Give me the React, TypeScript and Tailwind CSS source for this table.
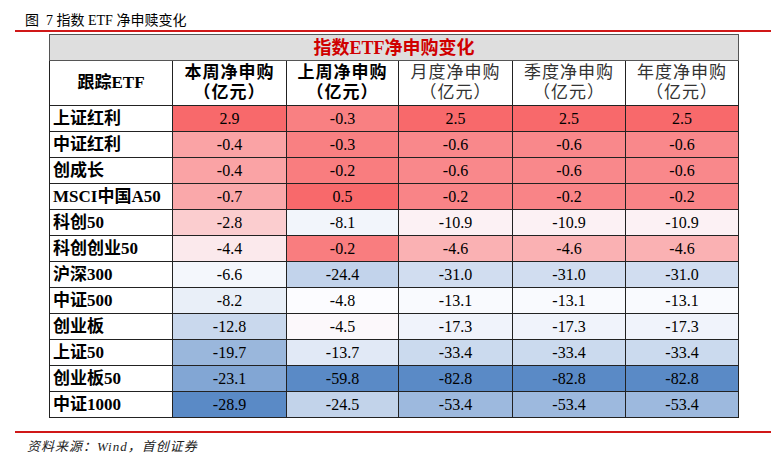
const rows: { name: string; v: number[] }[] = [
  { name: '上证红利', v: [2.9, -0.3, 2.5, 2.5, 2.5] },
  { name: '中证红利', v: [-0.4, -0.3, -0.6, -0.6, -0.6] },
  { name: '创成长', v: [-0.4, -0.2, -0.6, -0.6, -0.6] },
  { name: 'MSCI中国A50', v: [-0.7, 0.5, -0.2, -0.2, -0.2] },
  { name: '科创50', v: [-2.8, -8.1, -10.9, -10.9, -10.9] },
  { name: '科创创业50', v: [-4.4, -0.2, -4.6, -4.6, -4.6] },
  { name: '沪深300', v: [-6.6, -24.4, -31.0, -31.0, -31.0] },
  { name: '中证500', v: [-8.2, -4.8, -13.1, -13.1, -13.1] },
  { name: '创业板', v: [-12.8, -4.5, -17.3, -17.3, -17.3] },
  { name: '上证50', v: [-19.7, -13.7, -33.4, -33.4, -33.4] },
  { name: '创业板50', v: [-23.1, -59.8, -82.8, -82.8, -82.8] },
  { name: '中证1000', v: [-28.9, -24.5, -53.4, -53.4, -53.4] },
];

const headers = [
  { title: '本周净申购', bold: true },
  { title: '上周净申购', bold: true },
  { title: '月度净申购', bold: false },
  { title: '季度净申购', bold: false },
  { title: '年度净申购', bold: false },
];

const RED = [248, 105, 107];
const MID = [252, 252, 255];
const BLUE = [90, 138, 198];

function mix(a: number[], b: number[], t: number) {
  const c = a.map((x, i) => Math.round(x + (b[i] - x) * t));
  return `rgb(${c[0]}, ${c[1]}, ${c[2]})`;
}

// excel style 3 colour scale, midpoint at the median of each column
function cellColor(col: number, v: number) {
  const vals = rows.map((r) => r.v[col]).sort((a, b) => a - b);
  const min = vals[0];
  const max = vals[vals.length - 1];
  const n = vals.length;
  const mid = n % 2 ? vals[(n - 1) / 2] : (vals[n / 2 - 1] + vals[n / 2]) / 2;
  if (v >= mid) return mix(MID, RED, max === mid ? 0 : (v - mid) / (max - mid));
  return mix(MID, BLUE, (mid - v) / (mid - min));
}

const serif = 'font-["Liberation_Serif","Noto_Sans_CJK_SC",serif]';

export default function App() {
  return (
    <div className={`w-[771px] h-[454px] bg-white text-black ${serif}`}>
      <div className="pl-[25px] pt-[12px] h-[30px] text-[14px] leading-[18px] whitespace-pre">
        {'图  7 指数 ETF 净申赎变化'}
      </div>
      <div className="ml-[15px] h-[2px] bg-[#d01818]" />
      <div className="pl-[49px] pt-[2px]">
        <table className="table-fixed border-collapse w-[689px]">
          <colgroup>
            <col className="w-[123px]" />
            <col className="w-[114px]" />
            <col className="w-[112px]" />
            <col className="w-[114px]" />
            <col className="w-[113px]" />
            <col className="w-[113px]" />
          </colgroup>
          <thead>
            <tr className="h-[26px]">
              <th
                colSpan={6}
                className="bg-[#dedede] border border-[#555] text-[#d00000] text-[18px] font-bold leading-none text-center pt-[1px]"
              >
                指数ETF净申购变化
              </th>
            </tr>
            <tr className="h-[45px]">
              <th className="border border-[#222] text-[17px] font-bold">跟踪ETF</th>
              {headers.map((h) => (
                <th
                  key={h.title}
                  className={`border border-[#222] text-[17px] leading-[20px] tracking-[1px] ${
                    h.bold ? 'font-semibold' : 'font-normal text-[#333]'
                  }`}
                >
                  <div>{h.title}</div>
                  <div>（亿元）</div>
                </th>
              ))}
            </tr>
          </thead>
          <tbody>
            {rows.map((r) => (
              <tr key={r.name} className="h-[26px]">
                <td className="border border-[#222] pl-[3px] text-[17px] font-semibold leading-none whitespace-nowrap">
                  {r.name}
                </td>
                {r.v.map((v, i) => (
                  <td
                    key={i}
                    className="border border-[#222] text-center text-[16px] leading-none"
                    style={{ backgroundColor: cellColor(i, v) }}
                  >
                    {v.toFixed(1)}
                  </td>
                ))}
              </tr>
            ))}
          </tbody>
        </table>
      </div>
      <div className="ml-[15px] mt-[13px] h-[2px] bg-[#d01818]" />
      <div className="pl-[27px] pt-[4px] text-[13px] italic tracking-[1px] text-[#222]">
        资料来源：Wind，首创证券
      </div>
    </div>
  );
}
